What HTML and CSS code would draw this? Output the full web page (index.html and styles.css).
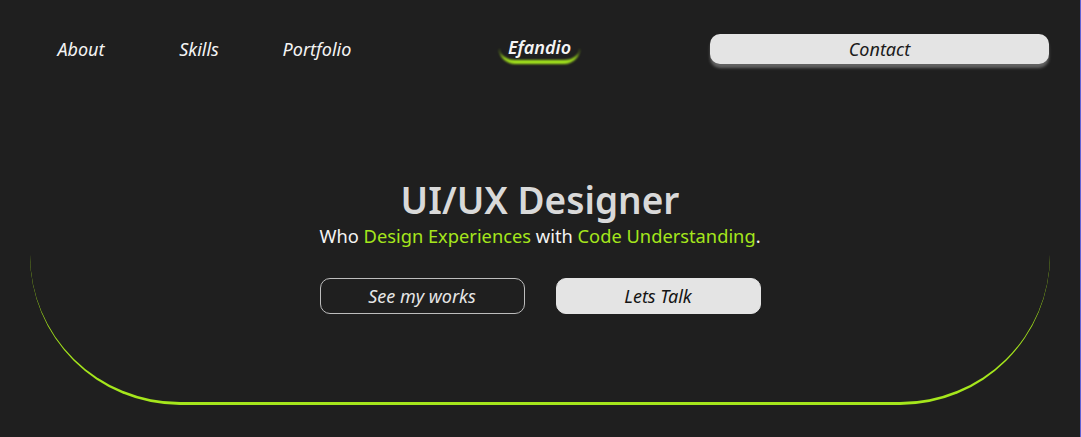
FILE: index.html
```html
<!DOCTYPE html>
<html lang="en">
<head>
<meta charset="utf-8">
<title>Efandio</title>
<link rel="stylesheet" href="styles.css">
</head>
<body>
<div class="page">
  <header class="header">
    <nav class="nav">
      <a class="nav-link" href="#">About</a>
      <a class="nav-link" href="#">Skills</a>
      <a class="nav-link" href="#">Portfolio</a>
    </nav>
    <div class="logo">Efandio</div>
    <a class="contact" href="#">Contact</a>
  </header>
  <section class="hero">
    <h1 class="title">UI/UX Designer</h1>
    <p class="subtitle">Who <span class="accent">Design Experiences</span> with <span class="accent">Code Understanding</span>.</p>
    <div class="actions">
      <a class="btn btn-outline" href="#">See my works</a>
      <a class="btn btn-solid" href="#">Lets Talk</a>
    </div>
  </section>
</div>
</body>
</html>
```
FILE: styles.css
```css
html, body {
  margin: 0;
  padding: 0;
}
body {
  background: #1f1f1f;
  font-family: "Noto Sans", "Open Sans", sans-serif;
  color: #f2f2f2;
}
.page {
  min-height: 100vh;
  box-sizing: border-box;
  box-shadow: inset -1px 0 0 #6262d4;
}
a {
  text-decoration: none;
}
.header {
  display: grid;
  grid-template-columns: 477px 81px 1fr;
  align-items: center;
  padding: 34px 32px 0 22px;
}
.nav {
  display: grid;
  grid-template-columns: repeat(3, 118px);
}
.nav-link {
  text-align: center;
  color: #f4f4f4;
  font-style: italic;
  font-size: 18px;
  line-height: 30px;
}
.logo {
  position: relative;
  height: 30px;
  line-height: 27px;
  text-align: center;
  font-style: italic;
  font-weight: 600;
  font-size: 18px;
  color: #f4f4f4;
}
.logo::after {
  content: "";
  position: absolute;
  left: 0;
  right: 0;
  top: 0;
  bottom: 0;
  border-bottom: 4px solid #a5e61c;
  border-radius: 0 0 16px 16px;
  filter: blur(0.8px);
}
.contact {
  justify-self: end;
  width: 339px;
  height: 30px;
  line-height: 30px;
  text-align: center;
  background: #e4e4e4;
  color: #1a1a1a;
  font-style: italic;
  font-size: 18px;
  border-radius: 10px;
  box-shadow: 0 4px 3px rgba(255, 255, 255, 0.3);
}
.hero {
  margin: 0 31px 0 30px;
  padding: 114px 0 88px;
  border-bottom: 3px solid #a5e61c;
  border-radius: 0 0 150px 150px;
  text-align: center;
}
.title {
  margin: 0;
  font-size: 37px;
  line-height: 44px;
  font-weight: 600;
  color: #d9d9d9;
}
.subtitle {
  margin: 2px 0 0;
  font-size: 18.3px;
  line-height: 23px;
  color: #f4f4f4;
}
.accent {
  color: #a5e61c;
}
.actions {
  display: flex;
  justify-content: center;
  gap: 31px;
  margin-top: 31px;
}
.btn {
  box-sizing: border-box;
  width: 205px;
  height: 36px;
  line-height: 34px;
  border-radius: 10px;
  font-style: italic;
  font-size: 18px;
}
.btn-outline {
  border: 1px solid #bdbdbd;
  color: #e6e6e6;
}
.btn-solid {
  border: 1px solid #e4e4e4;
  background: #e4e4e4;
  color: #141414;
}
```
